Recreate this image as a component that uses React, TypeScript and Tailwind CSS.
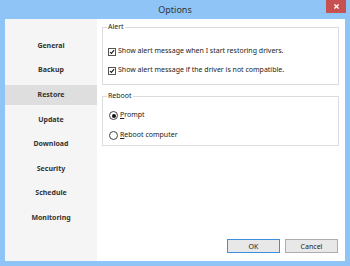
import { useState } from 'react';

const sections = ['General', 'Backup', 'Restore', 'Update', 'Download', 'Security', 'Schedule', 'Monitoring'];

function CheckBox({ checked }: { checked: boolean }) {
  return (
    <span className="w-[8px] h-[8px] border border-[#555] bg-white flex items-center justify-center shrink-0">
      {checked && (
        <svg viewBox="0 0 8 8" className="w-[8px] h-[8px]">
          <path d="M1.3 4 L3.2 5.9 L6.8 1.6" fill="none" stroke="#111" strokeWidth={1.4} />
        </svg>
      )}
    </span>
  );
}

function Radio({ checked }: { checked: boolean }) {
  return (
    <span className="w-[9px] h-[9px] rounded-full border border-[#444] bg-white flex items-center justify-center shrink-0">
      {checked && <span className="w-[4px] h-[4px] rounded-full bg-[#111]" />}
    </span>
  );
}

export default function App() {
  const [active, setActive] = useState('Restore');
  const [alerts, setAlerts] = useState([true, true]);
  const [reboot, setReboot] = useState<'prompt' | 'reboot'>('prompt');

  return (
    <div
      className="w-[350px] h-[266px] bg-[#8ec5f6] flex flex-col text-[#222]"
      style={{ fontFamily: '"Segoe UI", "Noto Sans", "Liberation Sans", sans-serif' }}
    >
      {/* Title bar */}
      <div className="relative h-[19px] flex items-center justify-center">
        <span className="text-[9px] text-[#333] leading-none">Options</span>
        <div className="absolute right-[4px] top-0 w-[20px] h-[13px] bg-[#c75050] flex items-center justify-center">
          <svg viewBox="0 0 6 6" className="w-[5px] h-[5px]">
            <path d="M0.5 0.5 L5.5 5.5 M5.5 0.5 L0.5 5.5" stroke="white" strokeWidth={1.5} />
          </svg>
        </div>
      </div>

      {/* Body */}
      <div className="flex-1 mx-[5px] mb-[5px] bg-white flex">
        {/* Sidebar */}
        <div className="w-[92px] bg-[#f5f5f5] pt-[17px] flex flex-col gap-[4.6px]">
          {sections.map((s) => (
            <div
              key={s}
              onClick={() => setActive(s)}
              className={`h-[20px] flex items-center justify-center text-[7px] font-bold text-[#333] cursor-pointer ${
                active === s ? 'bg-[#dedede]' : ''
              }`}
            >
              {s}
            </div>
          ))}
        </div>

        {/* Content */}
        <div className="flex-1 flex flex-col pl-[5px] pr-[6px] pt-[2px] pb-[8px] text-[7px]">
          <fieldset className="border border-[#dcdcdc] h-[64px] px-[5px]">
            <legend className="px-[1px] ml-[-1px] leading-[12px]">Alert</legend>
            <div className="flex flex-col gap-[8px] pt-[13px]">
              {['Show alert message when I start restoring drivers.', 'Show alert message if the driver is not compatible.'].map(
                (t, i) => (
                  <label
                    key={t}
                    className="flex items-center gap-[2px] h-[11px]"
                    onClick={() => setAlerts(alerts.map((a, j) => (j === i ? !a : a)))}
                  >
                    <CheckBox checked={alerts[i]} />
                    <span>{t}</span>
                  </label>
                )
              )}
            </div>
          </fieldset>

          <fieldset className="border border-[#dcdcdc] h-[56px] px-[6px] mt-[5px]">
            <legend className="px-[1px] ml-[-2px] leading-[12px]">Reboot</legend>
            <div className="flex flex-col gap-[9px] pt-[8px]">
              <label className="flex items-center gap-[2px] h-[11px]" onClick={() => setReboot('prompt')}>
                <Radio checked={reboot === 'prompt'} />
                <span><u>P</u>rompt</span>
              </label>
              <label className="flex items-center gap-[2px] h-[11px]" onClick={() => setReboot('reboot')}>
                <Radio checked={reboot === 'reboot'} />
                <span><u>R</u>eboot computer</span>
              </label>
            </div>
          </fieldset>

          <div className="mt-auto flex justify-end gap-[5px] pr-[1px]">
            <button className="w-[53px] h-[14px] border border-[#3c8fdc] bg-[#e8e8e8] text-[7px] leading-none">OK</button>
            <button className="w-[53px] h-[14px] border border-[#adadad] bg-[#e8e8e8] text-[7px] leading-none">Cancel</button>
          </div>
        </div>
      </div>
    </div>
  );
}
